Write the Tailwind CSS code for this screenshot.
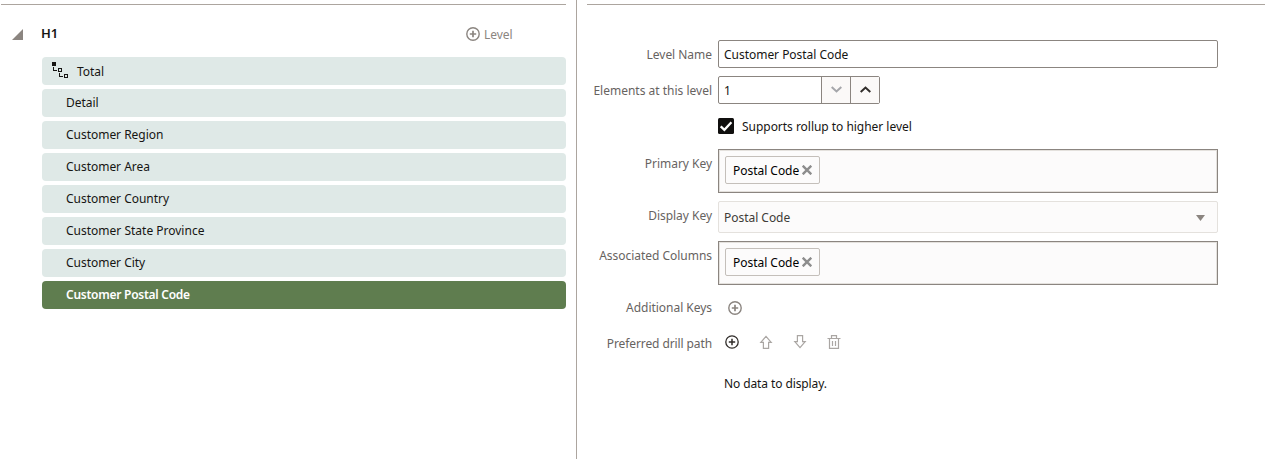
<!DOCTYPE html>
<html lang="en">
<head>
<meta charset="utf-8">
<title>Hierarchy levels</title>
<script src="https://cdn.jsdelivr.net/npm/@tailwindcss/browser@4"></script>
</head>
<body class="h-[459px] overflow-hidden bg-white font-['Noto_Sans',sans-serif] text-[12px] leading-[16px] tracking-[-0.03px] text-[#161513]">
<div class="flex h-full">
  <section class="ml-px mt-1 w-[565px] shrink-0 border-t border-[#aca59f]">
    <header class="flex h-[52px] items-center pt-[6px] pl-[11px]">
      <svg class="mt-[1px] size-[11px]" viewBox="0 0 11 11"><path d="M11 0V11H0Z" fill="#8b8580"/></svg>
      <h2 class="mb-[2px] ml-[18px] w-[425px] text-[13px] font-semibold">H1</h2>
      <button class="flex items-center gap-[4px] text-[#8b8580]">
        <svg class="size-[14px]" viewBox="0 0 14 14" fill="none" stroke="currentColor" stroke-width="1.4"><circle cx="7" cy="7" r="6.2"/><path d="M7 3.8v6.4M3.8 7h6.4" stroke-width="1.7"/></svg>
        <span class="mt-[1px]">Level</span>
      </button>
    </header>
    <ul class="ml-[41px] flex flex-col gap-1">
      <li class="flex h-7 items-center rounded bg-[#dfe9e7] pl-[10px]">
        <svg class="mb-[3px] size-4" viewBox="0 0 16 16" shape-rendering="crispEdges"><path d="M0 0h4v4H0zM1 5h1v3h3v1H1zM6 6h4v4H6zM7 11h1v3h3v1H7zM12 12h4v4h-4z" fill="#161513"/><path d="M7 7h2v2H7zM13 13h2v2h-2z" fill="#dfe9e7"/></svg>
        <span class="ml-[9px] pt-[2px]">Total</span>
      </li>
      <li class="h-7 rounded bg-[#dfe9e7] pt-[6px] pl-6">Detail</li>
      <li class="h-7 rounded bg-[#dfe9e7] pt-[6px] pl-6">Customer Region</li>
      <li class="h-7 rounded bg-[#dfe9e7] pt-[6px] pl-6">Customer Area</li>
      <li class="h-7 rounded bg-[#dfe9e7] pt-[6px] pl-6">Customer Country</li>
      <li class="h-7 rounded bg-[#dfe9e7] pt-[6px] pl-6 tracking-normal">Customer State Province</li>
      <li class="h-7 rounded bg-[#dfe9e7] pt-[6px] pl-6">Customer City</li>
      <li class="h-7 rounded bg-[#5f7d4f] pt-[6px] pl-6 font-semibold tracking-[-0.26px] text-white">Customer Postal Code</li>
    </ul>
  </section>
  <div class="ml-[10px] w-px shrink-0 bg-[#aca59f]"></div>
  <section class="mt-1 ml-[10px] grow border-t border-[#aca59f] pt-[35px]">
    <div class="flex h-9">
      <span class="mr-[6px] w-[125px] pt-[7px] text-right text-[#67635f]">Level Name</span>
      <div class="h-7 w-[500px] rounded-xs border border-[#8b8580] pt-[6px] pl-[5px]">Customer Postal Code</div>
    </div>
    <div class="flex h-[42px]">
      <span class="mr-[6px] w-[125px] pt-[7px] text-right tracking-normal text-[#67635f]">Elements at this level</span>
      <div class="flex h-7 w-[162px] rounded-xs border border-[#8b8580]">
        <span class="w-[102px] pt-[6px] pl-[5px]">1</span>
        <span class="flex w-[29px] items-center justify-center border-l border-[#8b8580] bg-[#fbf9f8] pb-px"><svg class="h-[7px] w-[11px]" viewBox="0 0 11 7" fill="none" stroke="#a5a6aa" stroke-width="2"><path d="M.7 1 5.500 5.500 10.300 1"/></svg></span>
        <span class="flex w-[29px] items-center justify-center border-l border-[#8b8580] bg-[#fbf9f8] pb-px"><svg class="h-[7px] w-[11px]" viewBox="0 0 11 7" fill="none" stroke="#312d2a" stroke-width="2"><path d="M.7 6 5.500 1.500 10.300 6"/></svg></span>
      </div>
    </div>
    <div class="ml-[131px] flex h-[31px]">
      <svg class="size-4" viewBox="0 0 16 16"><rect width="16" height="16" rx="1.500" fill="#100f0e"/><path d="m2.700 8.300 3.700 3.500 7-7.500" fill="none" stroke="#fff" stroke-width="2.300"/></svg>
      <span class="ml-2 pt-[1px]">Supports rollup to higher level</span>
    </div>
    <div class="flex h-[52px]">
      <span class="mr-[6px] w-[125px] pt-[7px] text-right text-[#67635f]">Primary Key</span>
      <div class="h-11 w-[500px] border border-[#8b8580]"><div class="h-full border border-[#e4e1dd] bg-[#fcfbfb] pt-[5px] pl-[5px]">
        <div class="flex h-7 w-[95px] items-center rounded-xs border border-[#c4bfba] pl-[7px] text-black"><span class="w-[66px] whitespace-nowrap pt-[2px]">Postal Code</span><svg class="ml-[3px] size-[10px]" viewBox="0 0 10 10" stroke="#8d8d8d" stroke-width="2.400"><path d="m.7.7 8.600 8.600M9.300.7.7 9.300"/></svg></div>
      </div></div>
    </div>
    <div class="flex h-10">
      <span class="mr-[6px] w-[125px] pt-[7px] text-right text-[#67635f]">Display Key</span>
      <div class="flex h-8 w-[500px] items-center justify-between rounded-xs border border-[#e4e1dd] bg-[#fcfbfb] pr-3 pl-[5px] text-[#403c38]"><span class="pt-[2px]">Postal Code</span><svg class="mt-[1px] h-[6px] w-[9px]" viewBox="0 0 9 6"><path d="M0 0h9L4.500 6Z" fill="#8b8580"/></svg></div>
    </div>
    <div class="flex h-[52px]">
      <span class="mr-[6px] w-[125px] pt-[7px] text-right text-[#67635f]">Associated Columns</span>
      <div class="h-11 w-[500px] border border-[#8b8580]"><div class="h-full border border-[#e4e1dd] bg-[#fcfbfb] pt-[5px] pl-[5px]">
        <div class="flex h-7 w-[95px] items-center rounded-xs border border-[#c4bfba] pl-[7px] text-black"><span class="w-[66px] whitespace-nowrap pt-[2px]">Postal Code</span><svg class="ml-[3px] size-[10px]" viewBox="0 0 10 10" stroke="#8d8d8d" stroke-width="2.400"><path d="m.7.7 8.600 8.600M9.300.7.7 9.300"/></svg></div>
      </div></div>
    </div>
    <div class="flex h-9">
      <span class="mr-[6px] w-[125px] pt-[7px] text-right text-[#67635f]">Additional Keys</span>
      <svg class="mt-2 ml-[10px] size-[14px]" viewBox="0 0 14 14" fill="none" stroke="#8b8580" stroke-width="1.400"><circle cx="7" cy="7" r="6.200"/><path d="M7 3.800v6.400M3.800 7h6.400" stroke-width="1.700"/></svg>
    </div>
    <div class="flex h-[47px]">
      <span class="mr-[6px] w-[125px] pt-[7px] text-right tracking-[-0.1px] text-[#67635f]">Preferred drill path</span>
      <div class="mt-[6px] ml-[7px] flex h-[14px] gap-5">
        <svg class="size-[14px]" viewBox="0 0 14 14" fill="none" stroke="#312d2a" stroke-width="1.300"><circle cx="7" cy="7" r="6.200"/><path d="M7 3.800v6.400M3.800 7h6.400" stroke-width="1.500"/></svg>
        <svg class="size-[14px]" viewBox="0 0 14 14" fill="none" stroke="#aaa6a3" stroke-width="1.200"><path d="M7 1.400 12.200 7.400H9.600V13.400H4.400V7.400H1.800Z"/></svg>
        <svg class="size-[14px]" viewBox="0 0 14 14" fill="none" stroke="#aaa6a3" stroke-width="1.200"><path d="M7 12.600 12.200 6.600H9.600V.6H4.400V6.600H1.800Z"/></svg>
        <svg class="size-[14px]" viewBox="0 0 14 14" fill="none" stroke="#aaa6a3" stroke-width="1.200"><path d="M.5 3.500h13M4.500 3.500V.6h5v2.900M2.500 3.500v9.900h9V3.500M5.500 6v5M8.500 6v5"/></svg>
      </div>
    </div>
    <p class="ml-[137px] tracking-[-0.1px]">No data to display.</p>
  </section>
</div>
</body>
</html>
